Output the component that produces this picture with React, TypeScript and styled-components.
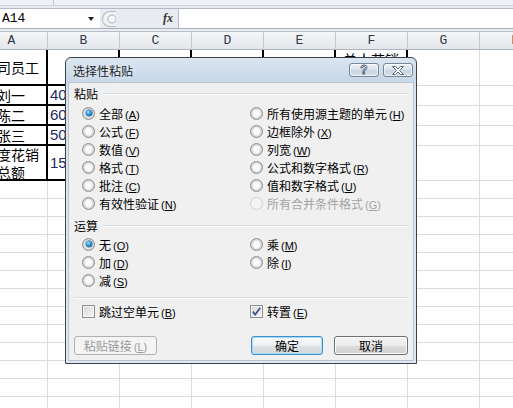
import styled, { createGlobalStyle } from 'styled-components';

const GlobalStyle = createGlobalStyle`
  html, body {
    margin: 0;
    padding: 0;
    background: #fff;
  }
  body {
    font-family: "Noto Sans CJK SC", "Liberation Sans", sans-serif;
  }
`;

const COLUMNS = ['A', 'B', 'C', 'D', 'E', 'F', 'G', 'H'];

// rows of the bordered table: [name, value, title in F]
const TABLE_ROWS: { name: string; value: string; title?: string }[] = [
	{ name: '公司员工', value: '', title: '单人花销' },
	{ name: '刘一', value: '40' },
	{ name: '陈二', value: '60' },
	{ name: '张三', value: '50' },
	{ name: '年度花销\n总额', value: '150' },
];
const EMPTY_ROWS = 13;

const PASTE_LEFT = [
	{ label: '全部', key: 'A', checked: true },
	{ label: '公式', key: 'F' },
	{ label: '数值', key: 'V' },
	{ label: '格式', key: 'T' },
	{ label: '批注', key: 'C' },
	{ label: '有效性验证', key: 'N' },
];
const PASTE_RIGHT = [
	{ label: '所有使用源主题的单元', key: 'H' },
	{ label: '边框除外', key: 'X' },
	{ label: '列宽', key: 'W' },
	{ label: '公式和数字格式', key: 'R' },
	{ label: '值和数字格式', key: 'U' },
	{ label: '所有合并条件格式', key: 'G', disabled: true },
];

type Option = { label: string; key: string; checked?: boolean; disabled?: boolean };

const Label = ({ text, hotkey }: { text: string; hotkey: string }) => (
	<>
		{text}
		<Key>
			(<u>{hotkey}</u>)
		</Key>
	</>
);

const RadioColumn = ({ items }: { items: Option[] }) => (
	<StColumn>
		{items.map((item) => (
			<StOption key={item.key} $disabled={item.disabled}>
				<StRadio $checked={item.checked} $disabled={item.disabled} />
				<span>
					<Label text={item.label} hotkey={item.key} />
				</span>
			</StOption>
		))}
	</StColumn>
);

const App = () => {
	return (
		<StWindow>
			<GlobalStyle />
			<StRibbonEdge>
				<StRibbonTick />
			</StRibbonEdge>
			<StFormulaBar>
				<StNameBox>
					A14
					<StDropArrow />
				</StNameBox>
				<StSplitter>
					<StKnob />
					<StFx>fx</StFx>
				</StSplitter>
				<StFormulaInput />
			</StFormulaBar>
			<StGap />
			<StSheet>
				{COLUMNS.map((c) => (
					<StHeadCell key={c}>{c}</StHeadCell>
				))}
				{TABLE_ROWS.map((row, r) =>
					COLUMNS.map((c, i) => {
						const thick = i < 6;
						let content: string = '';
						let kind: 'name' | 'num' | 'title' | undefined;
						if (i === 0) {
							content = row.name;
							kind = 'name';
						} else if (i === 1) {
							content = row.value;
							kind = 'num';
						} else if (i === 5 && row.title) {
							content = row.title;
							kind = 'title';
						}
						return (
							<StCell key={`${r}-${c}`} $thick={thick} $kind={kind}>
								{content}
							</StCell>
						);
					})
				)}
				{Array.from({ length: EMPTY_ROWS }).map((_, r) =>
					COLUMNS.map((c) => <StCell key={`e${r}-${c}`} />)
				)}
			</StSheet>

			<StDialog>
				<StTitleBar>
					<StTitle>选择性粘贴</StTitle>
					<StCaptionButtons>
						<StCaptionButton>
							<StHelpGlyph>?</StHelpGlyph>
						</StCaptionButton>
						<StCaptionButton>
							<svg width="14" height="9" viewBox="0 0 14 9">
								<path
									d="M1.5 0.5H4.5L7 3L9.5 0.5H12.5L8.5 4.5L12.5 8.5H9.5L7 6L4.5 8.5H1.5L5.5 4.5Z"
									fill="#fff"
									stroke="#4a5a6e"
									strokeWidth="0.9"
									strokeLinejoin="round"
								/>
							</svg>
						</StCaptionButton>
					</StCaptionButtons>
				</StTitleBar>
				<StPanel>
					<StSectionHead>
						<span>粘贴</span>
						<StRule />
					</StSectionHead>
					<StOptionGrid>
						<RadioColumn items={PASTE_LEFT} />
						<RadioColumn items={PASTE_RIGHT} />
					</StOptionGrid>

					<StSectionHead $gap={6}>
						<span>运算</span>
						<StRule />
					</StSectionHead>
					<StOptionGrid $gap={1}>
						<RadioColumn
							items={[
								{ label: '无', key: 'O', checked: true },
								{ label: '加', key: 'D' },
								{ label: '减', key: 'S' },
							]}
						/>
						<RadioColumn
							items={[
								{ label: '乘', key: 'M' },
								{ label: '除', key: 'I' },
							]}
						/>
					</StOptionGrid>

					<StDivider />

					<StOptionGrid $gap={3}>
						<StOption>
							<StCheckbox />
							<span>
								<Label text="跳过空单元" hotkey="B" />
							</span>
						</StOption>
						<StOption>
							<StCheckbox>
								<svg width="9" height="9" viewBox="0 0 9 9">
									<path d="M0.8 4.6L3.2 7.6L8.3 0.8" fill="none" stroke="#3f5390" strokeWidth="1.7" />
								</svg>
							</StCheckbox>
							<span>
								<Label text="转置" hotkey="E" />
							</span>
						</StOption>
					</StOptionGrid>

					<StButtonRow>
						<StButton $variant="disabled" $width={83} disabled>
							<Label text="粘贴链接" hotkey="L" />
						</StButton>
						<StButtonGroup>
							<StButton $variant="default" $width={72}>
								确定
							</StButton>
							<StButton $width={74}>取消</StButton>
						</StButtonGroup>
					</StButtonRow>
				</StPanel>
			</StDialog>
		</StWindow>
	);
};

export default App;

const StWindow = styled.div`
	position: relative;
	width: 513px;
	height: 408px;
	overflow: hidden;
	background: #fff;
	display: flex;
	flex-direction: column;
`;

const StRibbonEdge = styled.div`
	flex: none;
	height: 9px;
	box-sizing: border-box;
	background: linear-gradient(#eef1f4 0 5px, #cdd3da 5px 6px, #e6eaee 6px);
	border-bottom: 1px solid #b3bcc6;
	display: flex;
`;

const StRibbonTick = styled.span`
	width: 1px;
	height: 5px;
	margin-left: 53px;
	background: #c3c9d1;
`;

const StFormulaBar = styled.div`
	flex: none;
	height: 20px;
	box-sizing: border-box;
	border-bottom: 1px solid #a9b1bb;
	display: flex;
	background: #e8ebef;
`;

const StNameBox = styled.div`
	width: 100px;
	display: flex;
	align-items: center;
	padding-left: 2px;
	box-sizing: border-box;
	background: #fff;
	font: 13px 'Liberation Mono', monospace;
	color: #000;
`;

const StDropArrow = styled.span`
	margin-left: auto;
	margin-right: 6px;
	width: 0;
	height: 0;
	border-left: 3px solid transparent;
	border-right: 3px solid transparent;
	border-top: 4px solid #222;
`;

const StSplitter = styled.div`
	width: 78px;
	display: flex;
	align-items: center;
	padding-left: 2px;
	box-sizing: border-box;
`;

const StKnob = styled.span`
	width: 14px;
	height: 16px;
	box-sizing: border-box;
	border: 1px solid #b4bbc4;
	border-right: none;
	border-radius: 8px 0 0 8px;
	background: radial-gradient(circle at 9px 7px, #f6f7f8 0 3px, #c9ced4 3.5px 4.5px, #f0f2f4 5px);
`;

const StFx = styled.span`
	margin-left: auto;
	margin-right: 5px;
	font: italic bold 12px 'Liberation Serif', serif;
	color: #333;
`;

const StFormulaInput = styled.div`
	flex: 1;
	background: #fff;
	border-left: 1px solid #b3bcc6;
`;

const StGap = styled.div`
	flex: none;
	height: 2px;
	background: #e8ebef;
	border-bottom: 1px solid #b7bec7;
`;

const StSheet = styled.div`
	display: grid;
	grid-template-columns: repeat(8, 72px);
	grid-template-rows: 18px 36px 20px 20px 20px 35px repeat(${EMPTY_ROWS}, 18px);
	margin-left: -24px;
	width: max-content;
`;

const StHeadCell = styled.div`
	box-sizing: border-box;
	display: flex;
	align-items: center;
	justify-content: center;
	background: linear-gradient(#f4f6f8, #e3e6ea);
	border-right: 1px solid #c3c8ce;
	border-bottom: 1px solid #abb4be;
	font: 13px 'Liberation Mono', monospace;
	color: #2c3a48;
`;

const StCell = styled.div<{ $thick?: boolean; $kind?: 'name' | 'num' | 'title' }>`
	box-sizing: border-box;
	overflow: hidden;
	display: flex;
	white-space: pre-line;
	border-right: ${(p) => (p.$thick ? '2px solid #000' : '1px solid #dadcdd')};
	border-bottom: ${(p) => (p.$thick ? '2px solid #000' : '1px solid #dadcdd')};
	font-size: 14px;
	line-height: 18px;
	color: #000;
	align-items: ${(p) => (p.$kind === 'title' ? 'flex-start' : 'center')};
	justify-content: ${(p) => (p.$kind === 'num' ? 'flex-start' : 'center')};
	text-align: center;
	padding-left: ${(p) => (p.$kind === 'num' ? '2px' : '0')};
	${(p) => p.$kind === 'num' && `font-family: 'Liberation Sans', sans-serif; font-size: 15px; color: #1d2a66;`}
`;

const StDialog = styled.div`
	position: absolute;
	left: 65px;
	top: 57px;
	width: 352px;
	height: 307px;
	box-sizing: border-box;
	border: 1px solid #38424e;
	border-radius: 6px 6px 0 0;
	padding: 0 2px 2px;
	display: flex;
	flex-direction: column;
	background: linear-gradient(#dbe5f0 0, #c8d8e8 22px, #d9e3ee 30px, #e1e8f0 100%);
`;

const StTitleBar = styled.div`
	height: 24px;
	flex: none;
	display: flex;
	align-items: center;
	padding: 0 1px 0 5px;
`;

const StTitle = styled.span`
	font-size: 12px;
	color: #1e1e1e;
	text-shadow: 0 0 6px #eef4fa;
`;

const StCaptionButtons = styled.div`
	margin-left: auto;
	display: flex;
	gap: 4px;
`;

const StCaptionButton = styled.span`
	width: 30px;
	height: 14px;
	box-sizing: border-box;
	border: 1px solid #76869b;
	border-radius: 3px;
	background: linear-gradient(#eef3f8, #d7e1ec 50%, #c9d5e2 51%, #d6e0eb);
	box-shadow: inset 0 0 0 1px rgba(255, 255, 255, 0.6);
	display: flex;
	align-items: center;
	justify-content: center;
`;

const StHelpGlyph = styled.span`
	font: bold 12px 'Liberation Sans', sans-serif;
	line-height: 12px;
	color: #fff;
	-webkit-text-stroke: 0.8px #4a5a6e;
`;

const StPanel = styled.div`
	flex: 1;
	box-sizing: border-box;
	background: #f0f0f0;
	border: 1px solid #b7c3d0;
	padding: 0 4px 0 5px;
	font-size: 12px;
	color: #000;
`;

const StSectionHead = styled.div<{ $gap?: number }>`
	margin-top: ${(p) => p.$gap ?? 3}px;
	height: 16px;
	display: flex;
	align-items: center;
	gap: 5px;
	line-height: 16px;
`;

const StRule = styled.span`
	flex: 1;
	height: 0;
	border-top: 1px solid #d5dde5;
	border-bottom: 1px solid #fbfcfd;
`;

const StDivider = styled.div`
	margin-top: 8px;
	border-top: 1px solid #d5dde5;
	border-bottom: 1px solid #fbfcfd;
`;

const StOptionGrid = styled.div<{ $gap?: number }>`
	margin-top: ${(p) => p.$gap ?? 2}px;
	padding-left: 8px;
	display: grid;
	grid-template-columns: 168px 1fr;
	align-items: start;
`;

const StColumn = styled.div`
	display: flex;
	flex-direction: column;
`;

const StOption = styled.div<{ $disabled?: boolean }>`
	height: 18px;
	display: flex;
	align-items: center;
	gap: 4px;
	white-space: nowrap;
	color: ${(p) => (p.$disabled ? '#a3a3a3' : '#000')};
`;

const Key = styled.span`
	margin-left: 2px;
	font: 11px 'Liberation Sans', sans-serif;
`;

const StRadio = styled.span<{ $checked?: boolean; $disabled?: boolean }>`
	flex: none;
	width: 13px;
	height: 13px;
	box-sizing: border-box;
	border-radius: 50%;
	border: 1px solid ${(p) => (p.$disabled ? '#cfd0d1' : '#8e8f90')};
	background: ${(p) =>
		p.$disabled
			? '#f4f4f4'
			: 'radial-gradient(circle at 50% 50%, #fbfbfb 0 3px, #e3e3e3 4px, #cbcbcb 6px)'};
	display: flex;
	align-items: center;
	justify-content: center;
	&::after {
		content: '';
		display: ${(p) => (p.$checked ? 'block' : 'none')};
		width: 6px;
		height: 6px;
		border-radius: 50%;
		background: radial-gradient(circle at 40% 35%, #a6e4ff 0, #1b8ad2 50%, #0b4c86 100%);
		box-shadow: 0 0 0 0.5px #1d4f7a;
	}
`;

const StCheckbox = styled.span`
	flex: none;
	width: 13px;
	height: 13px;
	box-sizing: border-box;
	border: 1px solid #8e8f90;
	background: linear-gradient(135deg, #d6d6d6, #f7f7f7);
	box-shadow: inset 0 0 0 1px #f4f4f4;
	display: flex;
	align-items: center;
	justify-content: center;
`;

const StButtonRow = styled.div`
	margin-top: 16px;
	display: flex;
	justify-content: space-between;
	padding-right: 1px;
`;

const StButtonGroup = styled.div`
	display: flex;
	gap: 11px;
`;

const StButton = styled.button<{ $variant?: 'default' | 'disabled'; $width: number }>`
	width: ${(p) => p.$width}px;
	height: 19px;
	box-sizing: border-box;
	padding: 0;
	border-radius: 3px;
	font: 12px 'Noto Sans CJK SC', sans-serif;
	line-height: 17px;
	color: #000;
	border: 1px solid #707070;
	background: linear-gradient(#f3f3f3 0%, #ebebeb 50%, #dddddd 51%, #cfcfcf 100%);
	box-shadow: inset 0 0 0 1px #fbfbfb;
	${(p) =>
		p.$variant === 'default' &&
		`
		border-color: #3c8fd0;
		box-shadow: inset 0 0 0 1px #a7dcf6;
		background: linear-gradient(#f6f8f9 0%, #eef0f1 50%, #e0e3e5 51%, #d4d7d9 100%);
	`}
	${(p) =>
		p.$variant === 'disabled' &&
		`
		border-color: #adb2b5;
		background: #f4f4f4;
		box-shadow: none;
		color: #9a9a9a;
	`}
`;
